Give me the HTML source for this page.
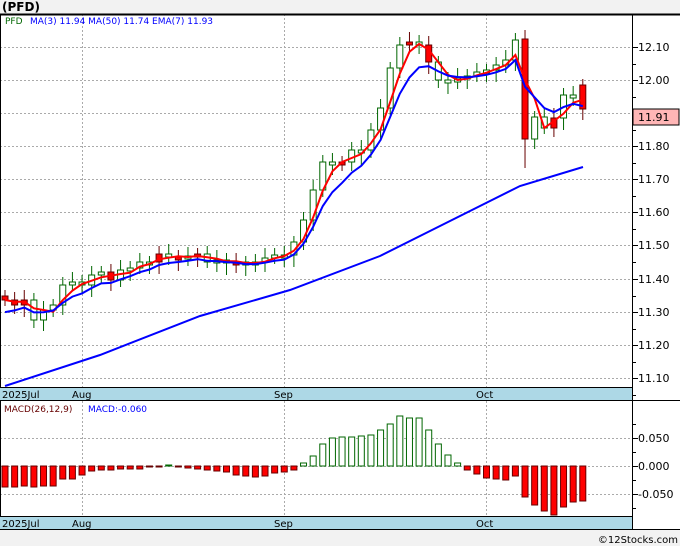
<!DOCTYPE html><html><head><meta charset="utf-8"><style>
body{margin:0;background:#f2f2f2;width:680px;height:546px;overflow:hidden;font-family:"DejaVu Sans","Liberation Sans",sans-serif}
svg{position:absolute;left:0;top:0}
</style></head><body>
<svg id="s" width="680" height="546" xmlns="http://www.w3.org/2000/svg" font-family="DejaVu Sans, Liberation Sans, sans-serif">
<rect x="0" y="14" width="680" height="516" fill="#fff"/>
<text x="2" y="11" font-size="12" font-weight="bold" fill="#000">(PFD)</text>
<g id="g"></g>
</svg>
<script>
(function(){
var g=document.getElementById('g'),h='';
function L(x1,y1,x2,y2,c,w,d){h+='<line x1="'+x1+'" y1="'+y1+'" x2="'+x2+'" y2="'+y2+'" stroke="'+c+'" stroke-width="'+(w||1)+'"'+(d?' stroke-dasharray="'+d+'"':'')+'/>';}
function R(x,y,w,hh,f,s){h+='<rect x="'+x+'" y="'+y+'" width="'+w+'" height="'+hh+'" fill="'+f+'" stroke="'+(s||'none')+'"/>';}
function T(x,y,t,c,sz,a){h+='<text x="'+x+'" y="'+y+'" font-size="'+(sz||10)+'" fill="'+c+'"'+(a?' text-anchor="'+a+'"':'')+'>'+t+'</text>';}
var py=[47,80,113,146,179,212,245,279,312,345,378];
py.forEach(function(y){L(0,y+.5,632,y+.5,'#aaa',1,'2,2')});
[82,284,486].forEach(function(x){L(x+.5,14,x+.5,387,'#aaa',1,'2,2');L(x+.5,401,x+.5,516,'#aaa',1,'2,2')});
[438,466,494].forEach(function(y){L(0,y+.5,632,y+.5,'#aaa',1,'2,2')});
L(0,14.5,680,14.5,'#000',2);L(632.5,14,632.5,530,'#000');L(0.5,14,0.5,530,'#000');
R(0,387,632,14,'#add8e6');L(0,387.5,632,387.5,'#000');L(0,400.5,680,400.5,'#000');
R(0,516,632,14,'#add8e6');L(0,516.5,632,516.5,'#000');L(0,529.5,680,529.5,'#000');
T(2,398,'2025Jul','#000',10);T(72,398,'Aug','#000',10);T(274,398,'Sep','#000',10);T(476,398,'Oct','#000',10);
T(2,527,'2025Jul','#000',10);T(72,527,'Aug','#000',10);T(274,527,'Sep','#000',10);T(476,527,'Oct','#000',10);
var lab=['12.10','12.00','','11.80','11.70','11.60','11.50','11.40','11.30','11.20','11.10'];
py.forEach(function(y,i){L(632,y+.5,638,y+.5,'#000');L(632,y+17+.5,636,y+17+.5,'#000');if(lab[i])T(638,y+4,lab[i],'#000',11)});
R(633,109,46,16,'#ffb6b6','#000');T(638,121,'11.91','#000',11);
[438,466,494].forEach(function(y,i){L(632,y+.5,638,y+.5,'#000');T(638,y+4,['0.050','0.000','-0.050'][i],'#000',11)});
[424,452,480,508].forEach(function(y){L(632,y+.5,636,y+.5,'#000')});
var c=[300,305,300,320,310,305,285,282,285,275,272,280,270,268,262,262,254,257,258,256,254,262,260,262,262,265,262,258,255,255,242,220,190,162,162,162,150,150,130,108,68,45,42,45,62,80,82,78,76,72,70,65,60,40,139,117,128,118,95,95,109];
var red={0:1,1:1,2:1,11:1,16:1,18:1,20:1,24:1,35:1,42:1,44:1,54:1,57:1,60:1};
var X=function(i){return 5+i*9.63};
var i;
for(i=0;i<c.length;i++){var x=X(i),cl=c[i],op=i?c[i-1]:296;if(i==54)op=39;if(i==60)op=85;
 var r=red[i],t;if(r&&op>cl){t=op;op=cl;cl=t;} if(!r&&op<cl){t=op;op=cl;cl=t;}
 var tp=Math.min(op,cl),bt=Math.max(op,cl);if(bt-tp<3)bt=tp+3;
 var hi=tp-6-(i*7%5),lo=bt+6+(i*3%7);if(i==54)lo=168;
 L(x,hi,x,lo,r?'#600':'#060');R(x-3,tp,6,bt-tp,r?'#f00':'#fff',r?'#600':'#060');}
var m3='',e7='',e=c[0]+15;for(i=0;i<c.length;i++){e=e+(c[i]-e)*0.33;e7+=(i?'L':'M')+X(i).toFixed(1)+','+(e+2).toFixed(1);
 var a=(c[Math.max(0,i-2)]+c[Math.max(0,i-1)]+c[i])/3;m3+=(i?'L':'M')+X(i).toFixed(1)+','+a.toFixed(1);}
h+='<path d="'+m3+'" fill="none" stroke="#f00" stroke-width="2"/>';
h+='<path d="'+e7+'" fill="none" stroke="#00f" stroke-width="2"/>';
h+='<path d="M5,386L100,355L200,316L290,290L380,256L430,231L480,206L520,186L583,167" fill="none" stroke="#00f" stroke-width="2"/>';
var m=[-21,-21,-20,-21,-20,-20,-13,-13,-9,-5,-4,-4,-3,-3,-3,-1,-1,1,-1,-2,-3,-4,-5,-6,-9,-10,-11,-10,-7,-6,-4,3,10,22,28,29,29,30,31,36,42,50,48,48,36,22,11,3,-4,-8,-12,-13,-14,-10,-31,-39,-45,-49,-41,-36,-35];
for(i=0;i<m.length;i++){var xx=X(i),v=m[i];if(v>=0)R(xx-3,466-v,6,Math.max(v,1),'#fff','#060');else R(xx-3,466,6,-v,'#f00','#600');}
T(4,412,'MACD(26,12,9)','#600',9);T(88,412,'MACD:-0.060','#00f',9);
T(5,24,'PFD','#060',9);T(30,24,'MA(3)  11.94  MA(50)  11.74  EMA(7)  11.93','#00f',9);
T(678,543,'©12Stocks.com','#000',10,'end');
g.innerHTML=h;
})();
</script>
</body></html>
